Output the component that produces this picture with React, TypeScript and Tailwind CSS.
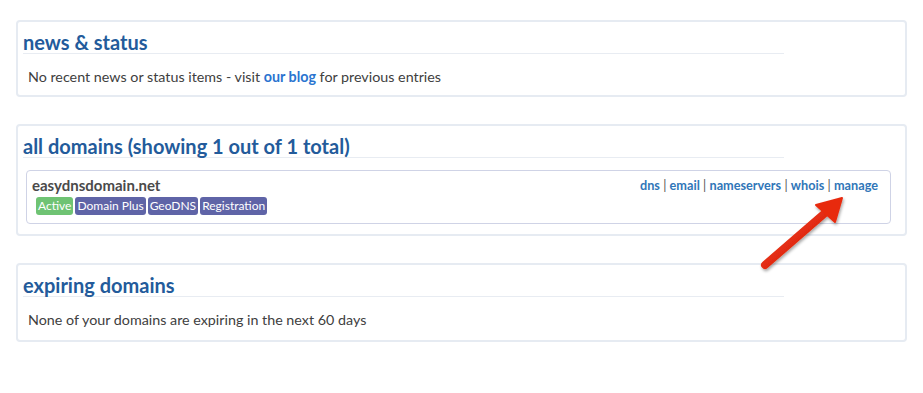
import React from 'react'

const font = { fontFamily: 'Lato, "Open Sans", sans-serif' }

function Card({ title, pb, children }: { title: string; pb: string; children: React.ReactNode }) {
  return (
    <div className={'mx-4 rounded border-2 border-[#e6ebf2] bg-white px-[5px] pt-[9px] ' + pb}>
      <h2 className="w-[761px] border-b border-[#e8ecf2] text-[20px] font-bold leading-[22px] text-[#235b9b]">
        {title}
      </h2>
      {children}
    </div>
  )
}

function Badge({ label, green }: { label: string; green?: boolean }) {
  return (
    <span
      className={
        'rounded-[3px] px-[2px] text-[12px] leading-[18px] text-white ' +
        (green ? 'bg-[#6fc373]' : 'bg-[#5f64a7]')
      }
    >
      {label}
    </span>
  )
}

export default function App() {
  const links = ['dns', 'email', 'nameservers', 'whois', 'manage']
  return (
    <div className="relative h-[393px] w-[923px] bg-white pt-[20px] text-[14.3px] text-[#404040]" style={font}>
      <Card title="news & status" pb="pb-[9px]">
        <p className="mt-[14px] pl-[5px] leading-[18px]">
          No recent news or status items - visit{' '}
          <a href="#" className="font-bold text-[#2a74d0]">our blog</a> for previous entries
        </p>
      </Card>

      <div className="mt-[27px]">
        <Card title="all domains (showing 1 out of 1 total)" pb="pb-[10px]">
          <div className="mt-[12px] ml-[3px] mr-[9px] flex justify-between rounded border border-[#cfd3e6] px-[5px] pb-[8px] pt-[5px]">
            <div>
              <div className="text-[15px] font-bold leading-[18px] text-[#4a4a4a]">easydnsdomain.net</div>
              <div className="mt-[3px] ml-[4px] flex gap-[2px]">
                <Badge label="Active" green />
                <Badge label="Domain Plus" />
                <Badge label="GeoDNS" />
                <Badge label="Registration" />
              </div>
            </div>
            <div className="pr-[7px] text-[12.7px] font-bold leading-[18px] text-[#3076b8]">
              {links.map((l, i) => (
                <span key={l}>
                  {i > 0 && <span className="font-normal text-[#555]"> | </span>}
                  <a href="#">{l}</a>
                </span>
              ))}
            </div>
          </div>
        </Card>
      </div>

      <div className="mt-[27px]">
        <Card title="expiring domains" pb="pb-[11px]">
          <p className="mt-[14px] pl-[5px] leading-[18px]">None of your domains are expiring in the next 60 days</p>
        </Card>
      </div>

      <svg className="absolute left-[755px] top-[192px]" width="95" height="85" viewBox="0 0 95 85">
        <defs>
          <filter id="sh" x="-20%" y="-20%" width="140%" height="140%">
            <feDropShadow dx="1" dy="2" stdDeviation="1.5" floodColor="#000" floodOpacity="0.35" />
          </filter>
          <linearGradient id="rg" x1="0" y1="0" x2="1" y2="1">
            <stop offset="0" stopColor="#f23a1c" />
            <stop offset="1" stopColor="#d41f08" />
          </linearGradient>
        </defs>
        <g filter="url(#sh)">
          <line x1="10" y1="73" x2="70" y2="21" stroke="url(#rg)" strokeWidth="8" strokeLinecap="round" />
          <polygon points="87,6 80,30 61,13" fill="#e82a10" stroke="#e82a10" strokeWidth="2" strokeLinejoin="round" />
        </g>
      </svg>
    </div>
  )
}
